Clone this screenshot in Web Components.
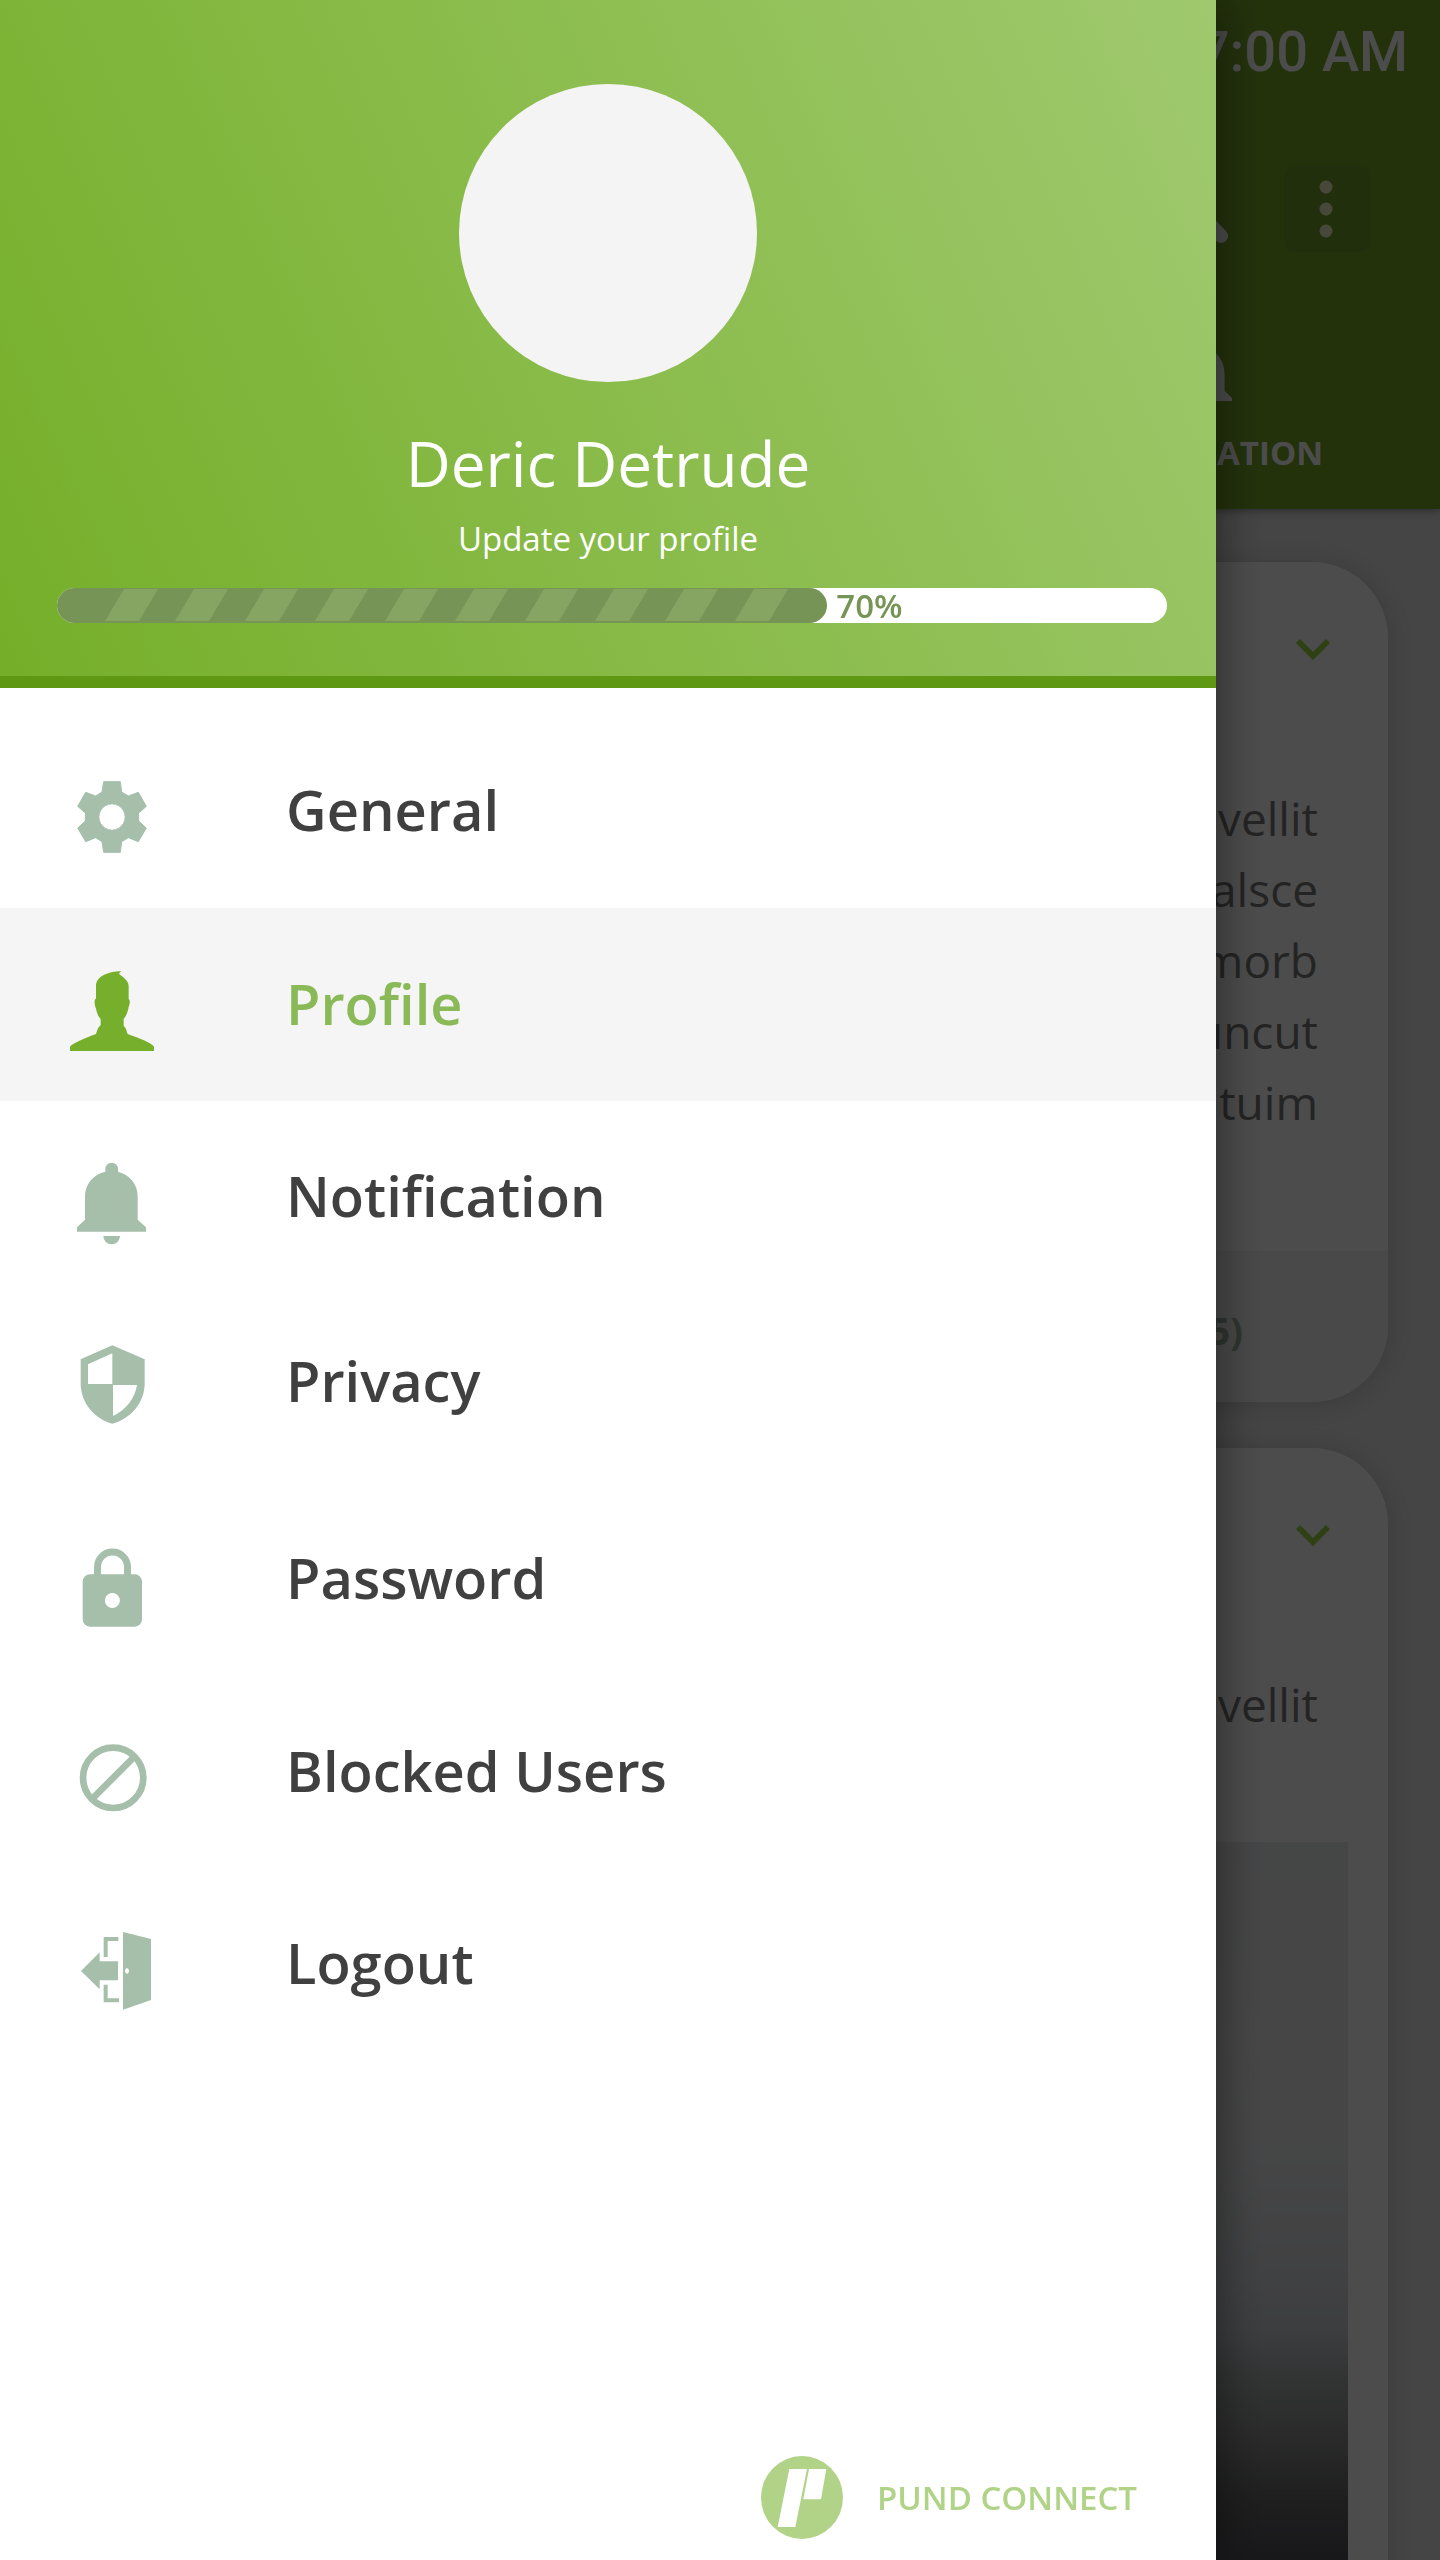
<!DOCTYPE html>
<html lang="en">
<head>
<meta charset="utf-8">
<meta name="viewport" content="width=device-width, initial-scale=1">
<title>Pund Connect</title>
<style>
  html, body { margin: 0; height: 100%; }
  body { font-family: "Open Sans", "Noto Sans", sans-serif; background: #e4e4e4; overflow: hidden; }
</style>
</head>
<body>
<pund-app>
  <feed-page slot="page">
    <app-bar slot="bar" time="7:00 AM" tab="ATION"></app-bar>
    <feed-card>
      <p>vellit<br>alsce<br>morb<br>uncut<br>ntuim</p>
      <span slot="footer">5)</span>
    </feed-card>
    <feed-card photo>
      <p>vellit</p>
    </feed-card>
  </feed-page>
  <side-drawer slot="drawer">
    <profile-header slot="header" name="Deric Detrude" hint="Update your profile" value="70"></profile-header>
    <nav-item icon="gear">General</nav-item>
    <nav-item icon="person" active>Profile</nav-item>
    <nav-item icon="bell">Notification</nav-item>
    <nav-item icon="shield">Privacy</nav-item>
    <nav-item icon="lock">Password</nav-item>
    <nav-item icon="block">Blocked Users</nav-item>
    <nav-item icon="logout">Logout</nav-item>
    <brand-mark slot="footer">PUND CONNECT</brand-mark>
  </side-drawer>
</pund-app>

<script>
const define = (name, render) => customElements.define(name, class extends HTMLElement {
  constructor() {
    super();
    this.attachShadow({ mode: "open" });
  }
  connectedCallback() {
    this.shadowRoot.innerHTML = render(this);
  }
});

define("pund-app", () => `
  <style>
    :host { display: block; height: 100vh; overflow: hidden; }
    .scrim { position: fixed; inset: 0; background: rgba(0, 0, 0, .7); }
    .drawer { position: fixed; inset: 0 224px 0 0; }
  </style>
  <slot name="page"></slot>
  <div class="scrim"></div>
  <div class="drawer"><slot name="drawer"></slot></div>`);

define("feed-page", () => `
  <style>
    :host { display: flex; flex-direction: column; height: 100vh; background: #e6e6e6; }
    main { flex: 1; min-height: 0; overflow: hidden; display: flex; flex-direction: column; gap: 46px; padding: 53px 52px 0; }
  </style>
  <slot name="bar"></slot>
  <main><slot></slot></main>`);

define("app-bar", el => `
  <style>
    :host { display: flex; flex-direction: column; height: 509px; box-sizing: border-box; background: #78a72b; color: #fff; box-shadow: 0 2px 8px rgba(0, 0, 0, .35); position: relative; }
    .status { display: flex; justify-content: flex-end; padding: 19px 32px 0; font: 500 56px/66px Roboto, sans-serif; }
    .tools { display: flex; justify-content: flex-end; align-items: center; gap: 48px; padding: 81px 70px 0; }
    button { border: 0; padding: 0; background: none; display: block; color: inherit; }
    .more { width: 86px; height: 86px; border-radius: 10px; background: #729f2b; }
    svg { display: block; }
    .tab { align-self: flex-end; width: 250px; margin: 98px 117px 0 0; display: flex; flex-direction: column; align-items: center; gap: 12px; color: inherit; text-decoration: none; }
    .tab span { align-self: flex-end; font-weight: 700; font-size: 33px; line-height: 45px; }
  </style>
  <div class="status"><time>${el.getAttribute("time")}</time></div>
  <div class="tools">
    <button aria-label="Search">
      <svg width="88" height="86" viewBox="0 0 88 86" fill="none" stroke="#fff">
        <circle cx="34" cy="30" r="22" stroke-width="10"/><path d="M52 48L73 70" stroke-width="14" stroke-linecap="round"/>
      </svg>
    </button>
    <button class="more" aria-label="More">
      <svg width="86" height="86" viewBox="0 0 86 86" fill="#f2f2c2"><circle cx="42" cy="21" r="6.5"/><circle cx="42" cy="43" r="6.5"/><circle cx="42" cy="65" r="6.5"/></svg>
    </button>
  </div>
  <a class="tab" href="#notifications">
    <svg width="68" height="68" viewBox="0 0 68 68" fill="#fff"><path d="M27 -3a7 7 0 0 1 14 0C54 1 60.600 12 60.600 25V41L68 48V51H0V48L8 41V25C8 12 14 1 27 -3Z"/></svg>
    <span>${el.getAttribute("tab")}</span>
  </a>`);

define("feed-card", el => {
  const photo = el.hasAttribute("photo");
  return `
  <style>
    :host { display: flex; flex-direction: column; flex: none; background: #fff; border-radius: 76px; overflow: hidden; box-shadow: 0 2px 24px rgba(0, 0, 0, .16); }
    header { display: flex; justify-content: flex-end; padding: 56px 43px 101px; }
    button { border: 0; padding: 0; background: none; width: 64px; height: 64px; }
    svg { display: block; }
    ::slotted(p) { margin: 0; padding: 0 70px ${photo ? 102 : 113}px; text-align: right; font-size: 46px; line-height: 71px; color: #787878; }
    footer { background: #f4f4f4; height: 151px; box-sizing: border-box; padding: 53px 145px 0; text-align: right; font-weight: 700; font-size: 38px; line-height: 52px; color: #9fb3a3; }
    .photo { height: 800px; margin: 0 40px; background: linear-gradient(#e8e9ec, #ececed 25%, #e8e9ec 40%, #d8dade 55%, #ccced4 61%, #a8acac 67%, #8c908c 74%, #68686a 82%, #505058 90%); }
  </style>
  <header><button aria-label="Expand"><svg width="64" height="64" viewBox="0 0 64 64" fill="none" stroke="#a0d848" stroke-width="6"><path d="M17 23L32 38L47 23"/></svg></button></header>
  <slot></slot>
  ${photo ? '<div class="photo" role="img" aria-label="Photo"></div>' : '<footer><slot name="footer"></slot></footer>'}`;
});

define("side-drawer", () => `
  <style>
    :host { display: flex; flex-direction: column; height: 100%; background: #fff; box-shadow: 0 0 46px rgba(0, 0, 0, .5); }
    nav { display: grid; grid-template-rows: 193px 193px 185px 197px 193px 192px 192px; padding-top: 27px; flex: 1; align-content: start; }
  </style>
  <slot name="header"></slot>
  <nav><slot></slot></nav>
  <slot name="footer"></slot>`);

define("profile-header", el => `
  <style>
    :host { display: flex; flex-direction: column; align-items: center; box-sizing: border-box; padding: 84px 49px 53px; border-bottom: 12px solid #5f9813; background: linear-gradient(66deg, #75af29, #a0c96f); color: #fff; text-align: center; }
    .avatar { width: 298px; height: 298px; border-radius: 50%; background: #f4f4f4; }
    h1 { margin: 37px 0 0; font-weight: 400; font-size: 62px; line-height: 88px; }
    a { margin: 9px 0 26px; font-size: 33px; line-height: 46px; color: inherit; text-decoration: none; }
    .bar { align-self: stretch; margin-left: 8px; display: flex; align-items: center; gap: 9px; height: 35px; border-radius: 18px; background: #fff; }
    .fill { flex: 0 0 69.4%; height: 35px; border-radius: 18px; overflow: hidden; background: #769456; }
    svg { display: block; width: 100%; height: 100%; }
    .bar span { font-weight: 600; font-size: 33px; line-height: 45px; color: #769456; }
  </style>
  <div class="avatar" role="img" aria-label="Avatar"></div>
  <h1>${el.getAttribute("name")}</h1>
  <a href="#profile">${el.getAttribute("hint")}</a>
  <div class="bar" role="progressbar" aria-valuenow="${el.getAttribute("value")}" aria-valuemin="0" aria-valuemax="100">
    <div class="fill"><svg>
      <defs><pattern id="stripes" x="40" y="0" width="70" height="35" patternUnits="userSpaceOnUse"><path d="M8 33H42L61 1H27Z" fill="#86a562"/></pattern></defs>
      <rect x="40" width="700" height="35" fill="url(#stripes)"/>
    </svg></div>
    <span>${el.getAttribute("value")}%</span>
  </div>`);

const icons = {
  gear: ["72 69", `<path stroke="currentColor" stroke-width="3" stroke-linejoin="round" fill-rule="evenodd" d="M191 125H241L245 156L265 168L295 157L319 199L296 219V243L319 264L295 305L265 293L245 305L241 337H191L186 305L167 293L137 305L113 264L136 243V219L113 199L137 157L167 168L186 156ZM216 191.500a39.500 39.500 0 1 0 .1 0Z"/>`],
  person: ["72 648", `<path d="M243 690C205 692 168 705 168 735V773C162 773 163 790 168 803C171 818 176 828 182 834V853C174 858 172 868 168 879C135 891 95 908 90 917V930H342V917C335 906 300 892 263 879C259 868 259 862 251 855V834C257 828 264 812 266 798C270 790 271 776 266 775V735C266 718 245 706 238 699C236 695 241 695 243 690Z"/>`],
  bell: ["72 57", `<path d="M196 125V117a19 19 0 0 1 38 0V125C270 135 293 163 293 198V269L318 292V305H111V292L135 269V198C135 163 160 133 196 125ZM190 318H240A25 25 0 0 1 190 318Z"/>`],
  shield: ["72 612", `<path fill-rule="evenodd" d="M217 646L314 688V760C314 820 270 868 217 881C165 868 122 820 122 760V688ZM217 670L144 703V762H217ZM219 765V858C258 840 285 805 291 765Z"/>`],
  lock: ["72 33", `<path fill-rule="evenodd" d="M150 163H284a22 22 0 0 1 22 22V298a22 22 0 0 1 -22 22H150a22 22 0 0 1 -22 -22V185a22 22 0 0 1 22 -22ZM217 219a22.500 22.500 0 1 0 .1 0Z"/><path fill="none" stroke="currentColor" stroke-width="21" d="M172.500 166V141a45 45 0 0 1 90 0V166"/>`],
  block: ["72 612", `<g fill="none" stroke="currentColor" stroke-width="20"><circle cx="219.500" cy="773.500" r="90.500"/><path d="M161 832L278 715"/></g>`],
  logout: ["72 48", `<path fill-rule="evenodd" d="M249 96L333 117V300L249 329ZM261 205a6 8 0 1 0 .1 0ZM123 213L179 157V184H234V241H179V268Z"/><path fill="none" stroke="currentColor" stroke-width="12" d="M197 171V117H235M197 254V301H237"/>`]
};

define("nav-item", el => {
  const [origin, shape] = icons[el.getAttribute("icon")];
  const active = el.hasAttribute("active");
  return `
  <style>
    :host { display: block; }
    a { display: flex; align-items: center; gap: 126px; min-height: ${active ? 193 : 192}px; padding: 0 64px; text-decoration: none; font-weight: 600; font-size: 56px; line-height: 76px; color: ${active ? "#8aba57" : "#404040"}; background: ${active ? "#f5f5f5" : "transparent"}; }
    svg { flex: none; display: block; color: ${active ? "#76af2b" : "#a5bfab"}; }
    span { padding-bottom: 4px; }
  </style>
  <a href="#${el.getAttribute("icon")}"${active ? ' aria-current="page"' : ""}>
    <svg width="96" height="96" viewBox="${origin} 288 288" fill="currentColor" aria-hidden="true">${shape}</svg>
    <span><slot></slot></span>
  </a>`;
});

define("brand-mark", () => `
  <style>
    :host { display: flex; justify-content: flex-end; align-items: center; gap: 34px; padding: 0 79px 21px; color: #b1d388; font-weight: 600; font-size: 33px; line-height: 45px; }
    svg { display: block; }
  </style>
  <svg width="82" height="83" viewBox="0 0 82 83" aria-hidden="true"><ellipse cx="41" cy="41.500" rx="41" ry="41.500" fill="#b1d388"/><path fill="#fff" d="M28.300 13H46L34.300 71H16.700ZM48 13H65.300L60 43.300H42.300Z"/></svg>
  <span><slot></slot></span>`);
</script>
</body>
</html>
